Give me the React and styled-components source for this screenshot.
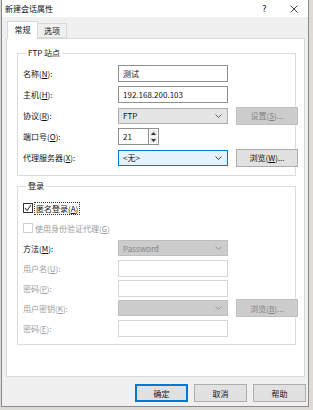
import React from 'react';
import styled, { createGlobalStyle, css } from 'styled-components';

const GlobalStyle = createGlobalStyle`
  *, *::before, *::after { box-sizing: border-box; }
  html, body {
    margin: 0;
    padding: 0;
    background: #dedbd6;
  }
  body {
    font-family: "Noto Sans CJK SC", "Noto Sans", sans-serif;
    font-size: 8px;
    color: #111;
  }
`;

const Window = styled.div`
  width: 308px;
  height: 407px;
  margin-left: 1px;
  border: 1px solid #8a8a8a;
  border-top: none;
  background: #f0f0f0;
  display: flex;
  flex-direction: column;
`;

const TitleBar = styled.div`
  height: 17px;
  background: #fff;
  display: flex;
  align-items: center;
  padding-left: 3px;
`;

const Title = styled.div`
  flex: 1;
  line-height: 17px;
`;

const TitleButton = styled.div`
  width: 29px;
  height: 17px;
  display: flex;
  align-items: center;
  justify-content: center;
  color: #222;
  font-size: 9px;
  font-family: "DejaVu Sans", sans-serif;
`;

const Body = styled.div`
  flex: 1;
  display: flex;
  flex-direction: column;
  padding: 4px 3px 0 4px;
`;

const TabStrip = styled.div`
  height: 17px;
  display: flex;
  align-items: flex-end;
  padding-left: 1px;
  position: relative;
  z-index: 1;
`;

const Tab = styled.div`
  height: ${(p) => (p.$active ? '18px' : '15px')};
  width: ${(p) => (p.$active ? '31px' : '29px')};
  margin-bottom: ${(p) => (p.$active ? '-1px' : '0')};
  background: ${(p) => (p.$active ? '#fff' : '#f0f0f0')};
  border: 1px solid #d9d9d9;
  border-bottom: ${(p) => (p.$active ? 'none' : '1px solid #d9d9d9')};
  border-left: ${(p) => (p.$active ? '1px solid #d9d9d9' : 'none')};
  display: flex;
  align-items: center;
  justify-content: center;
  padding-bottom: ${(p) => (p.$active ? '2px' : '0')};
`;

const Panel = styled.div`
  height: 339px;
  background: #fff;
  border: 1px solid #d9d9d9;
  padding: 8px 8px 0 10px;
  display: flex;
  flex-direction: column;
  gap: 4px;
`;

const Group = styled.fieldset`
  margin: 0;
  border: 1px solid #dcdcdc;
  padding: ${(p) => p.$pad};
  min-width: 0;
`;

const Legend = styled.legend`
  padding: 0 2px;
  margin-left: 3px;
  line-height: 12px;
`;

const Grid = styled.div`
  display: grid;
  grid-template-columns: 87px 110px 62px;
  column-gap: 8px;
  grid-auto-rows: ${(p) => p.$row}px;
  align-items: center;
`;

const Label = styled.div`
  color: ${(p) => (p.$disabled ? '#9a9a9a' : '#111')};
  white-space: nowrap;
`;

const U = styled.span`
  text-decoration: underline;
`;

const fieldBase = css`
  height: 17px;
  width: 110px;
  display: flex;
  align-items: center;
  padding: 0 4px;
`;

const TextBox = styled.div`
  ${fieldBase}
  border: 1px solid ${(p) => (p.$disabled ? '#d6d6d6' : '#8f8f8f')};
  background: #fff;
`;

const comboColors = {
  normal: { bg: '#e5e5e5', border: '#adadad', color: '#111', arrow: '#606060' },
  hot: { bg: '#e5f1fb', border: '#0078d7', color: '#111', arrow: '#404040' },
  disabled: { bg: '#cccccc', border: '#bfbfbf', color: '#838383', arrow: '#9a9a9a' },
};

const ComboBox = styled.div`
  ${fieldBase}
  height: 16px;
  justify-content: space-between;
  padding-right: 5px;
  background: ${(p) => comboColors[p.$state].bg};
  border: 1px solid ${(p) => comboColors[p.$state].border};
  color: ${(p) => comboColors[p.$state].color};
`;

const Chevron = ({ color }) => (
  <svg width="7" height="4" viewBox="0 0 7 4">
    <polyline points="0.5,0.5 3.5,3.5 6.5,0.5" fill="none" stroke={color} strokeWidth="1" />
  </svg>
);

const Combo = ({ state = 'normal', children }) => (
  <ComboBox $state={state}>
    <span>{children}</span>
    <Chevron color={comboColors[state].arrow} />
  </ComboBox>
);

const SpinWrap = styled.div`
  display: flex;
  height: 17px;
`;

const SpinText = styled(TextBox)`
  width: 30px;
  border-right: none;
`;

const SpinButtons = styled.div`
  width: 11px;
  display: flex;
  flex-direction: column;
  border: 1px solid #8f8f8f;
  background: #fff;
`;

const SpinHalf = styled.div`
  flex: 1;
  display: flex;
  align-items: center;
  justify-content: center;
  background: #eaeaea;
  margin: 1px;
  & + & {
    margin-top: 0;
  }
`;

const Arrow = ({ up }) => (
  <svg width="5" height="3" viewBox="0 0 5 3">
    <polygon points={up ? '0,3 2.5,0 5,3' : '0,0 2.5,3 5,0'} fill="#333" />
  </svg>
);

const Button = styled.div`
  width: ${(p) => p.$w || 62}px;
  height: 18px;
  display: flex;
  align-items: center;
  justify-content: center;
  background: ${(p) => (p.$disabled ? '#cccccc' : '#e1e1e1')};
  border: 1px solid ${(p) => (p.$default ? '#0078d7' : p.$disabled ? '#bfbfbf' : '#adadad')};
  box-shadow: ${(p) => (p.$default ? 'inset 0 0 0 1px #0078d7' : 'none')};
  color: ${(p) => (p.$disabled ? '#838383' : '#111')};
`;

const CheckRow = styled.div`
  grid-column: 1 / -1;
  display: flex;
  align-items: center;
  gap: 2px;
  color: ${(p) => (p.$disabled ? '#9a9a9a' : '#111')};
`;

const Box = styled.div`
  width: 10px;
  height: 10px;
  border: 1px solid ${(p) => (p.$disabled ? '#cfcfcf' : '#333')};
  background: #fff;
  display: flex;
  align-items: center;
  justify-content: center;
`;

const FocusText = styled.span`
  outline: 1px dotted #333;
  outline-offset: 0;
  padding: 0 1px;
  line-height: 11px;
`;

const Footer = styled.div`
  display: flex;
  justify-content: flex-end;
  gap: 6px;
  padding-top: 7px;
  margin-right: -1px;
`;

const Empty = () => <span />;

export default function App() {
  return (
    <>
      <GlobalStyle />
      <Window>
        <TitleBar>
          <Title>新建会话属性</Title>
          <TitleButton>?</TitleButton>
          <TitleButton>
            <svg width="8" height="8" viewBox="0 0 8 8">
              <path d="M0.5 0.5 L7.5 7.5 M7.5 0.5 L0.5 7.5" stroke="#333" strokeWidth="0.9" />
            </svg>
          </TitleButton>
        </TitleBar>
        <Body>
          <TabStrip>
            <Tab $active>常规</Tab>
            <Tab>选项</Tab>
          </TabStrip>
          <Panel>
            <Group $pad="4px 0 7px 5px">
              <Legend>FTP 站点</Legend>
              <Grid $row={21}>
                <Label>名称(<U>N</U>):</Label>
                <TextBox>测试</TextBox>
                <Empty />

                <Label>主机(<U>H</U>):</Label>
                <TextBox>192.168.200.103</TextBox>
                <Empty />

                <Label>协议(<U>R</U>):</Label>
                <Combo>FTP</Combo>
                <Button $disabled>设置(<U>S</U>)...</Button>

                <Label>端口号(<U>O</U>):</Label>
                <SpinWrap>
                  <SpinText>21</SpinText>
                  <SpinButtons>
                    <SpinHalf><Arrow up /></SpinHalf>
                    <SpinHalf><Arrow /></SpinHalf>
                  </SpinButtons>
                </SpinWrap>
                <Empty />

                <Label>代理服务器(<U>X</U>):</Label>
                <Combo state="hot">&lt;无&gt;</Combo>
                <Button>浏览(<U>W</U>)...</Button>
              </Grid>
            </Group>

            <Group $pad="6px 0 6px 5px">
              <Legend>登录</Legend>
              <Grid $row={20}>
                <CheckRow>
                  <Box>
                    <svg width="8" height="8" viewBox="0 0 8 8">
                      <polyline points="1,4 3,6.5 7,1" fill="none" stroke="#222" strokeWidth="1" />
                    </svg>
                  </Box>
                  <FocusText>匿名登录(<U>A</U>)</FocusText>
                </CheckRow>
                <CheckRow $disabled>
                  <Box $disabled />
                  <span>使用身份验证代理(<U>G</U>)</span>
                </CheckRow>

                <Label>方法(<U>M</U>):</Label>
                <Combo state="disabled">Password</Combo>
                <Empty />

                <Label $disabled>用户名(<U>U</U>):</Label>
                <TextBox $disabled />
                <Empty />

                <Label $disabled>密码(<U>P</U>):</Label>
                <TextBox $disabled />
                <Empty />

                <Label $disabled>用户密钥(<U>K</U>):</Label>
                <Combo state="disabled" />
                <Button $disabled>浏览(<U>B</U>)...</Button>

                <Label $disabled>密码(<U>E</U>):</Label>
                <TextBox $disabled />
                <Empty />
              </Grid>
            </Group>
          </Panel>
          <Footer>
            <Button $w={53} $default>确定</Button>
            <Button $w={53}>取消</Button>
            <Button $w={53}>帮助</Button>
          </Footer>
        </Body>
      </Window>
    </>
  );
}
